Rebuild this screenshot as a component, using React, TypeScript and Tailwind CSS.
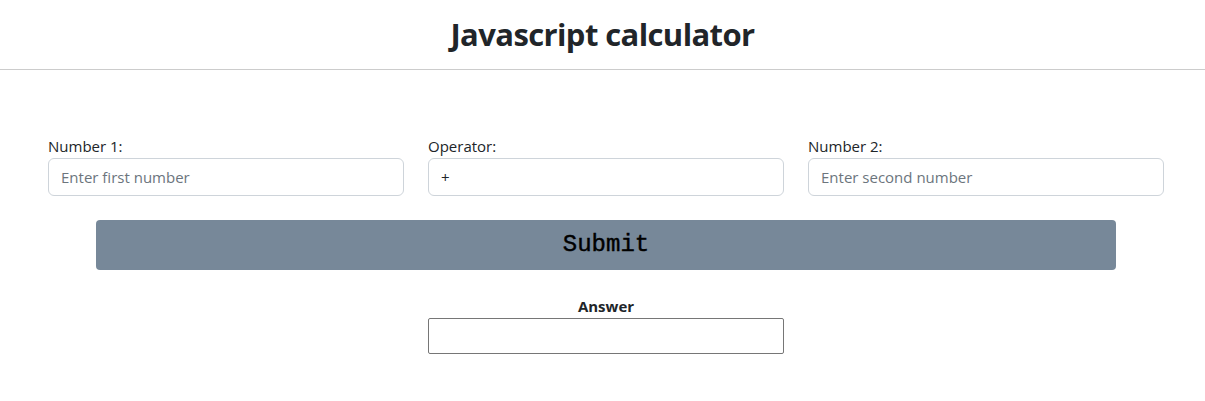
import React from "react";

export default function App() {
  const font = { fontFamily: '"Open Sans", "Noto Sans", sans-serif' };
  return (
    <div className="w-[1205px] h-[401px] bg-white text-[#212529]" style={font}>
      <header className="h-[70px] border-b border-[#cccccc] flex items-center justify-center">
        <h1 className="text-[31px] font-bold leading-none tracking-[-0.6px] mt-[-1px]">Javascript calculator</h1>
      </header>
      <div className="pt-[66px] pl-[48px]">
        <div className="flex gap-[24px]">
          <div className="w-[356px] flex flex-col">
            <label className="text-[15px] leading-[20px] mb-[2px]">Number 1:</label>
            <input
              className="h-[38px] border border-[#ced4da] rounded-[6px] px-[12px] text-[15px] placeholder-[#6c757d] outline-none"
              placeholder="Enter first number"
            />
          </div>
          <div className="w-[356px] flex flex-col">
            <label className="text-[15px] leading-[20px] mb-[2px]">Operator:</label>
            <div className="h-[38px] border border-[#ced4da] rounded-[6px] px-[12px] text-[15px] flex items-center">
              <span className="text-[#212529]">+</span>
            </div>
          </div>
          <div className="w-[356px] flex flex-col">
            <label className="text-[15px] leading-[20px] mb-[2px]">Number 2:</label>
            <input
              className="h-[38px] border border-[#ced4da] rounded-[6px] px-[12px] text-[15px] placeholder-[#6c757d] outline-none"
              placeholder="Enter second number"
            />
          </div>
        </div>
        <div className="pl-[48px] mt-[24px]">
          <button
            className="w-[1020px] h-[50px] bg-[#778899] rounded-[4px] text-[24px] text-black font-normal flex items-center justify-center"
            style={{ fontFamily: '"Liberation Mono", monospace', WebkitTextStroke: "0.4px black" }}
          >
            Submit
          </button>
        </div>
        <div className="w-[1116px] flex flex-col items-center mt-[26px]">
          <div className="text-[15px] font-bold leading-[20px] mb-[2px]">Answer</div>
          <div className="w-[356px] h-[36px] border border-[#767676] rounded-[2px]" />
        </div>
      </div>
    </div>
  );
}
